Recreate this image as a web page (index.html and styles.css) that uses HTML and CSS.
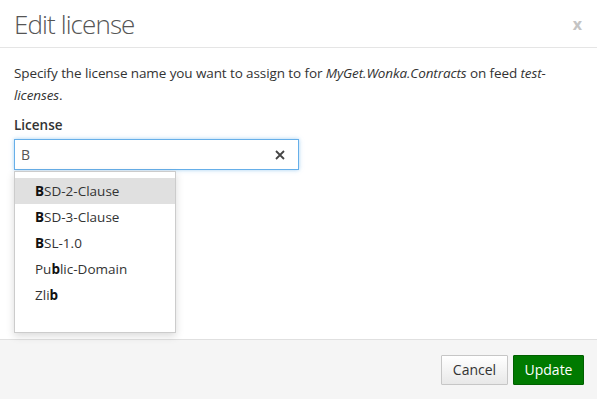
FILE: index.html
```html
<!DOCTYPE html>
<html>
<head>
    <title>Edit license</title>
    <link rel="stylesheet" href="styles.css">
</head>
<body>
    <div class="modal">
        <div class="modal-header">
            <h1>Edit license</h1>
            <span class="close">x</span>
        </div>
        <div class="modal-body">
            <p class="intro">Specify the license name you want to assign to for <em>MyGet.Wonka.Contracts</em> on feed <em>test-licenses</em>.</p>
            <label class="field-label">License</label>
            <div class="combo">
                <div class="combo-input">
                    <span class="value">B</span>
                    <svg class="clear" width="12" height="12" viewBox="0 0 12 12">
                        <path d="M2 2 L10 10 M10 2 L2 10" stroke="#444" stroke-width="1.8" fill="none"/>
                    </svg>
                </div>
                <ul class="suggestions">
                    <li class="active"><b>B</b>SD-2-Clause</li>
                    <li><b>B</b>SD-3-Clause</li>
                    <li><b>B</b>SL-1.0</li>
                    <li>Pu<b>b</b>lic-Domain</li>
                    <li>Zli<b>b</b></li>
                </ul>
            </div>
        </div>
        <div class="modal-footer">
            <button class="btn btn-default">Cancel</button>
            <button class="btn btn-primary">Update</button>
        </div>
    </div>
</body>
</html>
```

FILE: styles.css
```css
body {
    margin: 0;
    background-color: #fff;
    font-family: "Open Sans", "Noto Sans", sans-serif;
    font-size: 14px;
    color: #333;
}

.modal {
    width: 597px;
    height: 399px;
    display: flex;
    flex-direction: column;
}

.modal-header {
    display: flex;
    align-items: center;
    justify-content: space-between;
    height: 47px;
    padding: 0 14px;
    border-bottom: 1px solid #e5e5e5;
}

.modal-header h1 {
    margin: 0;
    font-size: 26px;
    font-weight: 300;
    letter-spacing: -0.9px;
    color: #555;
}

.close {
    color: #c4c4c4;
    font-weight: bold;
    font-size: 16px;
    margin-right: 1px;
}

.modal-body {
    flex: 1;
    padding: 14px 14px 0;
}

.intro {
    margin: 0 0 10px;
    line-height: 22px;
    font-size: 13.5px;
    letter-spacing: -0.1px;
}

.field-label {
    display: block;
    font-weight: 600;
    font-size: 13.5px;
    margin-bottom: 5px;
}

.combo {
    position: relative;
}

.combo-input {
    box-sizing: border-box;
    width: 285px;
    height: 31px;
    border: 1px solid #66afe9;
    box-shadow: 0 0 4px rgba(102, 175, 233, 0.6);
    display: flex;
    align-items: center;
    justify-content: space-between;
    padding: 0 12px 0 6px;
}

.combo-input .value {
    color: #555;
}

.suggestions {
    position: absolute;
    left: 0;
    top: 32px;
    width: 162px;
    height: 162px;
    box-sizing: border-box;
    margin: 0;
    padding: 6px 0 0;
    list-style: none;
    background-color: #fff;
    border: 1px solid #ccc;
    box-shadow: 0 3px 8px rgba(0, 0, 0, 0.15);
}

.suggestions li {
    height: 26px;
    line-height: 26px;
    padding-left: 20px;
    font-size: 13.5px;
    color: #333;
}

.suggestions li.active {
    background-color: #e0e0e0;
}

.suggestions b {
    color: #111;
}

.modal-footer {
    height: 60px;
    box-sizing: border-box;
    background-color: #f5f5f5;
    border-top: 1px solid #e0e0e0;
    display: flex;
    align-items: center;
    justify-content: flex-end;
    padding: 0 13px 0 0;
    gap: 5px;
}

.btn {
    height: 30px;
    font-family: inherit;
    font-size: 14px;
    border-radius: 1px;
    cursor: pointer;
}

.btn-default {
    width: 67px;
    padding: 0;
    background: linear-gradient(#fff, #e8e8e8);
    border: 1px solid #c6c6c6;
    color: #333;
}

.btn-primary {
    width: 71px;
    padding: 0;
    background-color: #007a00;
    border: 1px solid #006000;
    color: #fff;
}
```
